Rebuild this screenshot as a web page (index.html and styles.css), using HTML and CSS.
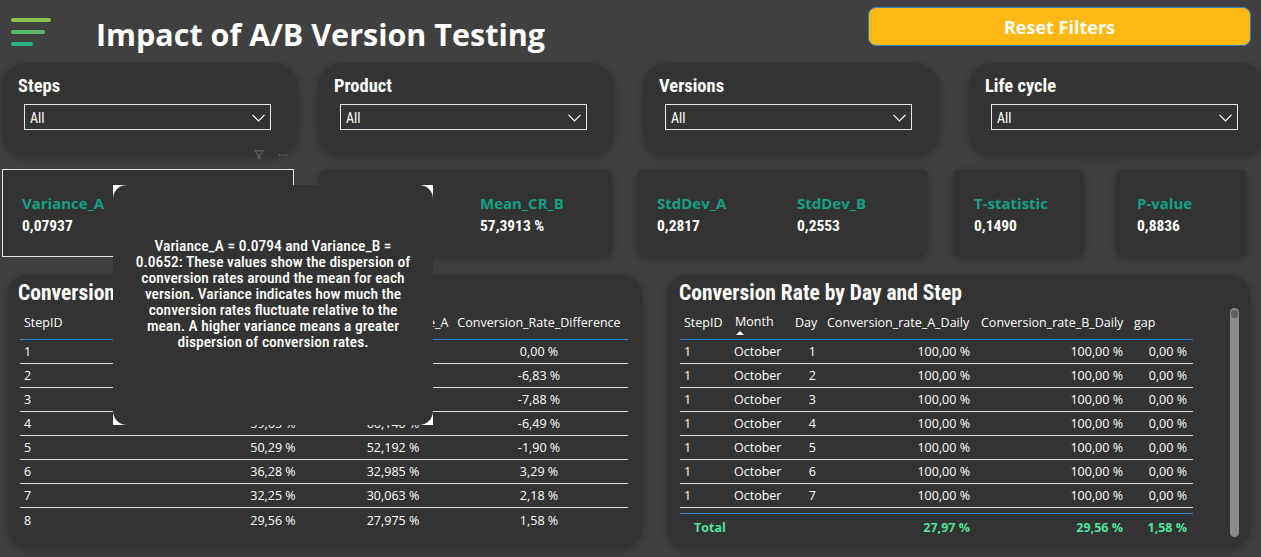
FILE: index.html
```html
<!DOCTYPE html>
<html lang="en">
<head>
<meta charset="utf-8">
<title>Impact of A/B Version Testing</title>
<link rel="stylesheet" href="styles.css">
</head>
<body>
<main class="report">
  <header class="topbar">
    <svg class="menu-icon" width="44" height="32" viewBox="0 0 44 32" aria-hidden="true">
      <line x1="4" y1="4" x2="40" y2="4" stroke="#8cc152" stroke-width="4" stroke-linecap="round"/>
      <line x1="4" y1="16" x2="34" y2="16" stroke="#5cb96a" stroke-width="4" stroke-linecap="round"/>
      <line x1="4" y1="28" x2="22" y2="28" stroke="#2bb38a" stroke-width="4" stroke-linecap="round"/>
    </svg>
    <h1 class="report-title">Impact of A/B Version Testing</h1>
    <button class="reset-btn" type="button">Reset Filters</button>
  </header>

  <section class="filters">
    <div class="filter-card">
      <div class="filter-label">Steps</div>
      <div class="dropdown"><span>All</span><svg class="chevron" width="13" height="8" viewBox="0 0 13 8"><polyline points="0.5,0.8 6.5,6.8 12.5,0.8"/></svg></div>
    </div>
    <div class="filter-card">
      <div class="filter-label">Product</div>
      <div class="dropdown"><span>All</span><svg class="chevron" width="13" height="8" viewBox="0 0 13 8"><polyline points="0.5,0.8 6.5,6.8 12.5,0.8"/></svg></div>
    </div>
    <div class="filter-card">
      <div class="filter-label">Versions</div>
      <div class="dropdown"><span>All</span><svg class="chevron" width="13" height="8" viewBox="0 0 13 8"><polyline points="0.5,0.8 6.5,6.8 12.5,0.8"/></svg></div>
    </div>
    <div class="filter-card">
      <div class="filter-label">Life cycle</div>
      <div class="dropdown"><span>All</span><svg class="chevron" width="13" height="8" viewBox="0 0 13 8"><polyline points="0.5,0.8 6.5,6.8 12.5,0.8"/></svg></div>
    </div>
  </section>

  <section class="kpis">
    <div class="kpi-card kpi-card--selected">
      <div class="visual-header">
        <svg width="10" height="10" viewBox="0 0 10 10"><path d="M0.8 0.8H9.2L5.8 5V9.2L4.2 8.4V5Z"/></svg>
        <span class="more">···</span>
      </div>
      <div class="metric"><div class="metric-label">Variance_A</div><div class="metric-value">0,07937</div></div>
      <div class="metric"><div class="metric-label">Variance_B</div><div class="metric-value">0,06520</div></div>
    </div>
    <div class="kpi-card kpi-card--mean">
      <div class="metric"><div class="metric-label">Mean_CR_A</div><div class="metric-value">55,9852 %</div></div>
      <div class="metric"><div class="metric-label">Mean_CR_B</div><div class="metric-value">57,3913 %</div></div>
    </div>
    <div class="kpi-card kpi-card--std">
      <div class="metric"><div class="metric-label">StdDev_A</div><div class="metric-value">0,2817</div></div>
      <div class="metric"><div class="metric-label">StdDev_B</div><div class="metric-value">0,2553</div></div>
    </div>
    <div class="kpi-card kpi-card--single">
      <div class="metric"><div class="metric-label">T-statistic</div><div class="metric-value">0,1490</div></div>
    </div>
    <div class="kpi-card kpi-card--single kpi-card--last">
      <div class="metric"><div class="metric-label">P-value</div><div class="metric-value">0,8836</div></div>
    </div>
  </section>

  <section class="tables">
    <div class="table-card table-card--steps">
      <h2 class="table-title">Conversion Rate by Step</h2>
      <div class="dt steps-table">
        <div class="dt-head">
          <div class="c-left">StepID</div>
          <div class="c-center">Conversion_Rate_B</div>
          <div class="c-center">Conversion_Rate_A</div>
          <div class="c-center">Conversion_Rate_Difference</div>
        </div>
        <div class="dt-row"><div class="c-left">1</div><div class="c-center">100,00 %</div><div class="c-center">100,000 %</div><div class="c-center">0,00 %</div></div>
        <div class="dt-row"><div class="c-left">2</div><div class="c-center">83,96 %</div><div class="c-center">90,790 %</div><div class="c-center">-6,83 %</div></div>
        <div class="dt-row"><div class="c-left">3</div><div class="c-center">70,02 %</div><div class="c-center">77,900 %</div><div class="c-center">-7,88 %</div></div>
        <div class="dt-row"><div class="c-left">4</div><div class="c-center">59,65 %</div><div class="c-center">66,140 %</div><div class="c-center">-6,49 %</div></div>
        <div class="dt-row"><div class="c-left">5</div><div class="c-center">50,29 %</div><div class="c-center">52,192 %</div><div class="c-center">-1,90 %</div></div>
        <div class="dt-row"><div class="c-left">6</div><div class="c-center">36,28 %</div><div class="c-center">32,985 %</div><div class="c-center">3,29 %</div></div>
        <div class="dt-row"><div class="c-left">7</div><div class="c-center">32,25 %</div><div class="c-center">30,063 %</div><div class="c-center">2,18 %</div></div>
        <div class="dt-row"><div class="c-left">8</div><div class="c-center">29,56 %</div><div class="c-center">27,975 %</div><div class="c-center">1,58 %</div></div>
      </div>
    </div>

    <div class="table-card table-card--daily">
      <h2 class="table-title">Conversion Rate by Day and Step</h2>
      <div class="daily-body">
        <div class="dt daily-table">
          <div class="dt-head">
            <div class="c-left">StepID</div>
            <div class="c-left c-sorted"><span>Month</span><span class="sort-caret"></span></div>
            <div class="c-left">Day</div>
            <div class="c-left">Conversion_rate_A_Daily</div>
            <div class="c-left">Conversion_rate_B_Daily</div>
            <div class="c-left">gap</div>
          </div>
          <div class="dt-row"><div class="c-left">1</div><div class="c-left">October</div><div class="c-num">1</div><div class="c-num">100,00 %</div><div class="c-num">100,00 %</div><div class="c-num">0,00 %</div></div>
          <div class="dt-row"><div class="c-left">1</div><div class="c-left">October</div><div class="c-num">2</div><div class="c-num">100,00 %</div><div class="c-num">100,00 %</div><div class="c-num">0,00 %</div></div>
          <div class="dt-row"><div class="c-left">1</div><div class="c-left">October</div><div class="c-num">3</div><div class="c-num">100,00 %</div><div class="c-num">100,00 %</div><div class="c-num">0,00 %</div></div>
          <div class="dt-row"><div class="c-left">1</div><div class="c-left">October</div><div class="c-num">4</div><div class="c-num">100,00 %</div><div class="c-num">100,00 %</div><div class="c-num">0,00 %</div></div>
          <div class="dt-row"><div class="c-left">1</div><div class="c-left">October</div><div class="c-num">5</div><div class="c-num">100,00 %</div><div class="c-num">100,00 %</div><div class="c-num">0,00 %</div></div>
          <div class="dt-row"><div class="c-left">1</div><div class="c-left">October</div><div class="c-num">6</div><div class="c-num">100,00 %</div><div class="c-num">100,00 %</div><div class="c-num">0,00 %</div></div>
          <div class="dt-row"><div class="c-left">1</div><div class="c-left">October</div><div class="c-num">7</div><div class="c-num">100,00 %</div><div class="c-num">100,00 %</div><div class="c-num">0,00 %</div></div>
          <div class="dt-total">
            <div class="c-total-label">Total</div><div></div><div></div>
            <div class="c-num">27,97 %</div><div class="c-num">29,56 %</div><div class="c-num">1,58 %</div>
          </div>
        </div>
        <div class="scrollbar"><div class="scroll-cap"></div></div>
      </div>
    </div>
  </section>

  <div class="tooltip" role="tooltip">
    <div class="tooltip-body">Variance_A = 0.0794 and Variance_B =<br>0.0652: These values show the dispersion of<br>conversion rates around the mean for each<br>version. Variance indicates how much the<br>conversion rates fluctuate relative to the<br>mean. A higher variance means a greater<br>dispersion of conversion rates.</div>
  </div>
</main>
</body>
</html>
```

FILE: styles.css
```css
* { box-sizing: border-box; margin: 0; padding: 0; }

html, body {
  width: 1261px;
  height: 557px;
  overflow: hidden;
}

body {
  background: #404040;
  color: #ffffff;
  font-family: "Open Sans", "Noto Sans", sans-serif;
}

.report {
  position: relative;
  width: 1261px;
  height: 557px;
}

/* ---------- top bar ---------- */
.topbar {
  display: flex;
  align-items: flex-start;
  height: 63px;
}

.menu-icon {
  display: block;
  margin: 16px 0 0 9px;
  flex: none;
}

.report-title {
  margin: 16px 0 0 43px;
  font-size: 30.5px;
  line-height: 36px;
  font-weight: 700;
  white-space: nowrap;
}

.reset-btn {
  margin: 7px 10px 0 auto;
  width: 383px;
  height: 39px;
  background: #fdb913;
  border: 1px solid #2f7fc9;
  border-radius: 8px;
  color: #ffffff;
  font-family: "Open Sans", "Noto Sans", sans-serif;
  font-size: 18px;
  font-weight: 700;
  padding-top: 1px;
}

/* ---------- filter slicers ---------- */
.filters {
  display: grid;
  grid-template-columns: 316px 325px 326px 1fr;
  padding-left: 2px;
  height: 93px;
}

.filter-card {
  width: 296px;
  background: #343434;
  border-radius: 24px;
  box-shadow: 0 2px 10px rgba(0, 0, 0, 0.28);
  padding: 13px 0 0 16px;
}

.filter-label {
  font-family: "Roboto Condensed", "DejaVu Sans Condensed", Roboto, sans-serif;
  font-size: 18.5px;
  line-height: 20px;
  font-weight: 700;
  white-space: nowrap;
}

.dropdown {
  display: flex;
  align-items: center;
  justify-content: space-between;
  margin: 8px 0 0 6px;
  width: 247px;
  height: 26px;
  border: 1px solid #e8e8e8;
  padding: 2px 5px 0 5px;
  font-family: "Roboto Condensed", "DejaVu Sans Condensed", Roboto, sans-serif;
  font-size: 14px;
}

.chevron polyline {
  fill: none;
  stroke: #ffffff;
  stroke-width: 1.2;
}

/* ---------- KPI cards ---------- */
.kpis {
  display: flex;
  gap: 25px;
  padding-left: 2px;
  margin-top: 13px;
  height: 88px;
}

.kpi-card {
  position: relative;
  display: flex;
  background: #333333;
  border-radius: 8px;
  box-shadow: 0 2px 9px rgba(0, 0, 0, 0.25);
  padding: 24px 0 0 20px;
}

.kpi-card--selected {
  width: 292px;
  border: 1px solid #e6e6e6;
  border-radius: 0;
  box-shadow: none;
  padding: 23px 0 0 19px;
}

.kpi-card--mean { width: 293px; padding-left: 21px; }
.kpi-card--std { width: 291px; }
.kpi-card--single { width: 131px; padding-left: 21px; }
.kpi-card--last { margin-left: 7px; }

.visual-header {
  position: absolute;
  top: -20px;
  right: 5px;
  display: flex;
  align-items: center;
  gap: 14px;
  color: #6b6b6b;
  font-size: 13px;
  line-height: 10px;
}

.visual-header path {
  fill: none;
  stroke: #6b6b6b;
  stroke-width: 1;
}

.metric { width: 140px; flex: none; }

.metric-label {
  color: #12a086;
  font-size: 15px;
  line-height: 20px;
  font-weight: 700;
  white-space: nowrap;
}

.metric-value {
  margin-top: 3px;
  font-family: "Roboto Condensed", "DejaVu Sans Condensed", Roboto, sans-serif;
  font-size: 15.5px;
  line-height: 20px;
  font-weight: 700;
  white-space: nowrap;
}

/* ---------- tables ---------- */
.tables {
  display: flex;
  gap: 25px;
  padding-left: 8px;
  margin-top: 18px;
  height: 273px;
}

.table-card {
  background: #333333;
  border-radius: 20px;
  box-shadow: 0 2px 10px rgba(0, 0, 0, 0.28);
  padding-top: 6px;
}

.table-card--steps { width: 634px; padding-left: 10px; }
.table-card--daily { width: 583px; padding-left: 12px; }

.table-title {
  font-family: "Roboto Condensed", "DejaVu Sans Condensed", Roboto, sans-serif;
  font-size: 21.5px;
  line-height: 24px;
  font-weight: 700;
  white-space: nowrap;
}

.dt {
  font-size: 12.5px;
  color: #ffffff;
}

.steps-table {
  width: 608px;
  margin-left: 2px;
}

.dt-head,
.dt-row,
.dt-total {
  display: grid;
  align-items: center;
  white-space: nowrap;
}

.steps-table .dt-head,
.steps-table .dt-row {
  grid-template-columns: 190px 126px 114px 178px;
}

.daily-table .dt-head,
.daily-table .dt-row,
.daily-table .dt-total {
  grid-template-columns: 50px 60px 32px 154px 153px 64px;
}

.dt-head {
  height: 35px;
  border-bottom: 1px solid #2b88d8;
}

.dt-row {
  height: 24px;
  border-bottom: 1px solid #d9d9d9;
}

.steps-table .dt-row:last-child { border-bottom: none; }

.c-left { padding-left: 4px; }
.c-center { text-align: center; }
.c-num { text-align: right; padding-right: 6px; }

.dt-head .c-left { padding-left: 5px; }
.dt-head .c-left:first-child { padding-left: 4px; }

.c-sorted {
  align-self: stretch;
  display: flex;
  flex-direction: column;
  padding-top: 8px;
  line-height: 17px;
}

.sort-caret {
  width: 0;
  height: 0;
  margin: 1px 0 0 1px;
  border-left: 4px solid transparent;
  border-right: 4px solid transparent;
  border-bottom: 4px solid #ffffff;
}

.daily-body {
  display: flex;
  align-items: flex-start;
}

.daily-table {
  width: 513px;
  margin-left: 1px;
}

.dt-total {
  height: 28px;
  margin-top: 5px;
  border-top: 1px solid #2b88d8;
  color: #4fe39b;
  font-weight: 700;
}

.c-total-label { padding-left: 14px; }

.scrollbar {
  margin: 3px 0 0 37px;
  width: 9px;
  height: 229px;
  background: #8c8c8c;
  border-radius: 5px;
  padding: 2px 1px;
}

.scroll-cap {
  height: 8px;
  border-radius: 4px;
  background: #5f5f5f;
}

/* ---------- tooltip ---------- */
.tooltip {
  position: absolute;
  left: 113px;
  top: 185px;
  width: 320px;
  height: 240px;
  background: #ffffff;
}

.tooltip-body {
  height: 100%;
  background: #333333;
  border-radius: 14px;
  padding-top: 53px;
  text-align: center;
  font-family: "Roboto Condensed", "DejaVu Sans Condensed", Roboto, sans-serif;
  font-size: 15.5px;
  line-height: 16px;
  font-weight: 500;
  white-space: nowrap;
}
```
